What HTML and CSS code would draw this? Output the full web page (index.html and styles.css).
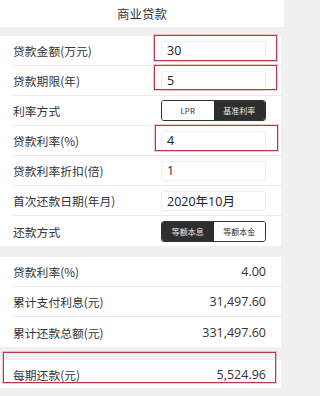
FILE: index.html
```html
<!DOCTYPE html>
<html lang="zh">
<head>
<meta charset="utf-8">
<link rel="stylesheet" href="styles.css">
</head>
<body>
<div class="page">
  <header class="top">商业贷款</header>
  <div class="band b1"></div>
  <section class="list">
    <div class="row"><span class="label">贷款金额(万元)</span><span class="field">30</span></div>
    <div class="row"><span class="label">贷款期限(年)</span><span class="field">5</span></div>
    <div class="row"><span class="label">利率方式</span>
      <span class="seg"><span class="opt">LPR</span><span class="opt on">基准利率</span></span></div>
    <div class="row"><span class="label">贷款利率(%)</span><span class="field">4</span></div>
    <div class="row"><span class="label">贷款利率折扣(倍)</span><span class="field">1</span></div>
    <div class="row"><span class="label">首次还款日期(年月)</span><span class="field">2020年10月</span></div>
    <div class="row last"><span class="label">还款方式</span>
      <span class="seg"><span class="opt on">等额本息</span><span class="opt">等额本金</span></span></div>
  </section>
  <div class="band b2"></div>
  <section class="list">
    <div class="row res"><span class="label">贷款利率(%)</span><span class="val">4.00</span></div>
    <div class="row res"><span class="label">累计支付利息(元)</span><span class="val">31,497.60</span></div>
    <div class="row res last"><span class="label">累计还款总额(元)</span><span class="val">331,497.60</span></div>
  </section>
  <div class="band b3"></div>
  <section class="list">
    <div class="row res final last"><span class="label">每期还款(元)</span><span class="val">5,524.96</span></div>
  </section>
  <div class="mark m1"></div>
  <div class="mark m2"></div>
  <div class="mark m3"></div>
  <div class="mark m4"></div>
</div>
</body>
</html>
```
FILE: styles.css
```css
* { box-sizing: border-box; }
html, body { margin: 0; padding: 0; }
body {
  width: 284px;
  height: 396px;
  overflow: hidden;
  background: #f0f0f0;
  font-family: "Noto Sans CJK SC", "Open Sans", sans-serif;
  color: #333;
}
.page { position: relative; width: 284px; height: 396px; }
.top {
  height: 27px;
  background: #fff;
  display: flex;
  align-items: center;
  justify-content: center;
  font-size: 12.5px;
  color: #333;
}
.band { background: #f0f0f0; }
.b1 { height: 9px; }
.b2 { height: 11px; }
.b3 { height: 13px; }
.list { background: #fff; padding-left: 13px; margin-right: 3px; }
.row {
  height: 30px;
  display: flex;
  align-items: center;
  justify-content: space-between;
  padding-right: 15px;
  border-bottom: 1px solid #ebebeb;
}
.row.last { border-bottom: none; }
.label { font-size: 11.8px; color: #333; }
.field {
  width: 105px;
  height: 20px;
  border: 1px solid #efefef;
  border-radius: 2px;
  padding-left: 5px;
  display: flex;
  align-items: center;
  font-family: "Open Sans", "Noto Sans CJK SC", sans-serif;
  font-size: 12.5px;
  color: #222;
}
.seg {
  width: 105px;
  height: 21px;
  border: 1px solid #333;
  border-radius: 3px;
  display: flex;
  overflow: hidden;
}
.opt {
  flex: 1;
  display: flex;
  align-items: center;
  justify-content: center;
  font-size: 8px;
  color: #333;
  background: #fff;
}
.opt.on { background: #2e2e2e; color: #e8e8e8; }
.val {
  font-family: "Open Sans", sans-serif;
  font-size: 12.5px;
  color: #333;
}
.final { height: 28px; }
.mark {
  position: absolute;
  border: 1.5px solid #b23c4a;
  box-shadow: 0 0 0 1px rgba(220, 120, 130, 0.4);
}
.m1 { left: 154px; top: 35px; width: 123px; height: 26px; }
.m2 { left: 154px; top: 65px; width: 123px; height: 25px; }
.m3 { left: 155px; top: 125px; width: 123px; height: 26px; }
.m4 { left: 3px; top: 352px; width: 273px; height: 31px; }
```
